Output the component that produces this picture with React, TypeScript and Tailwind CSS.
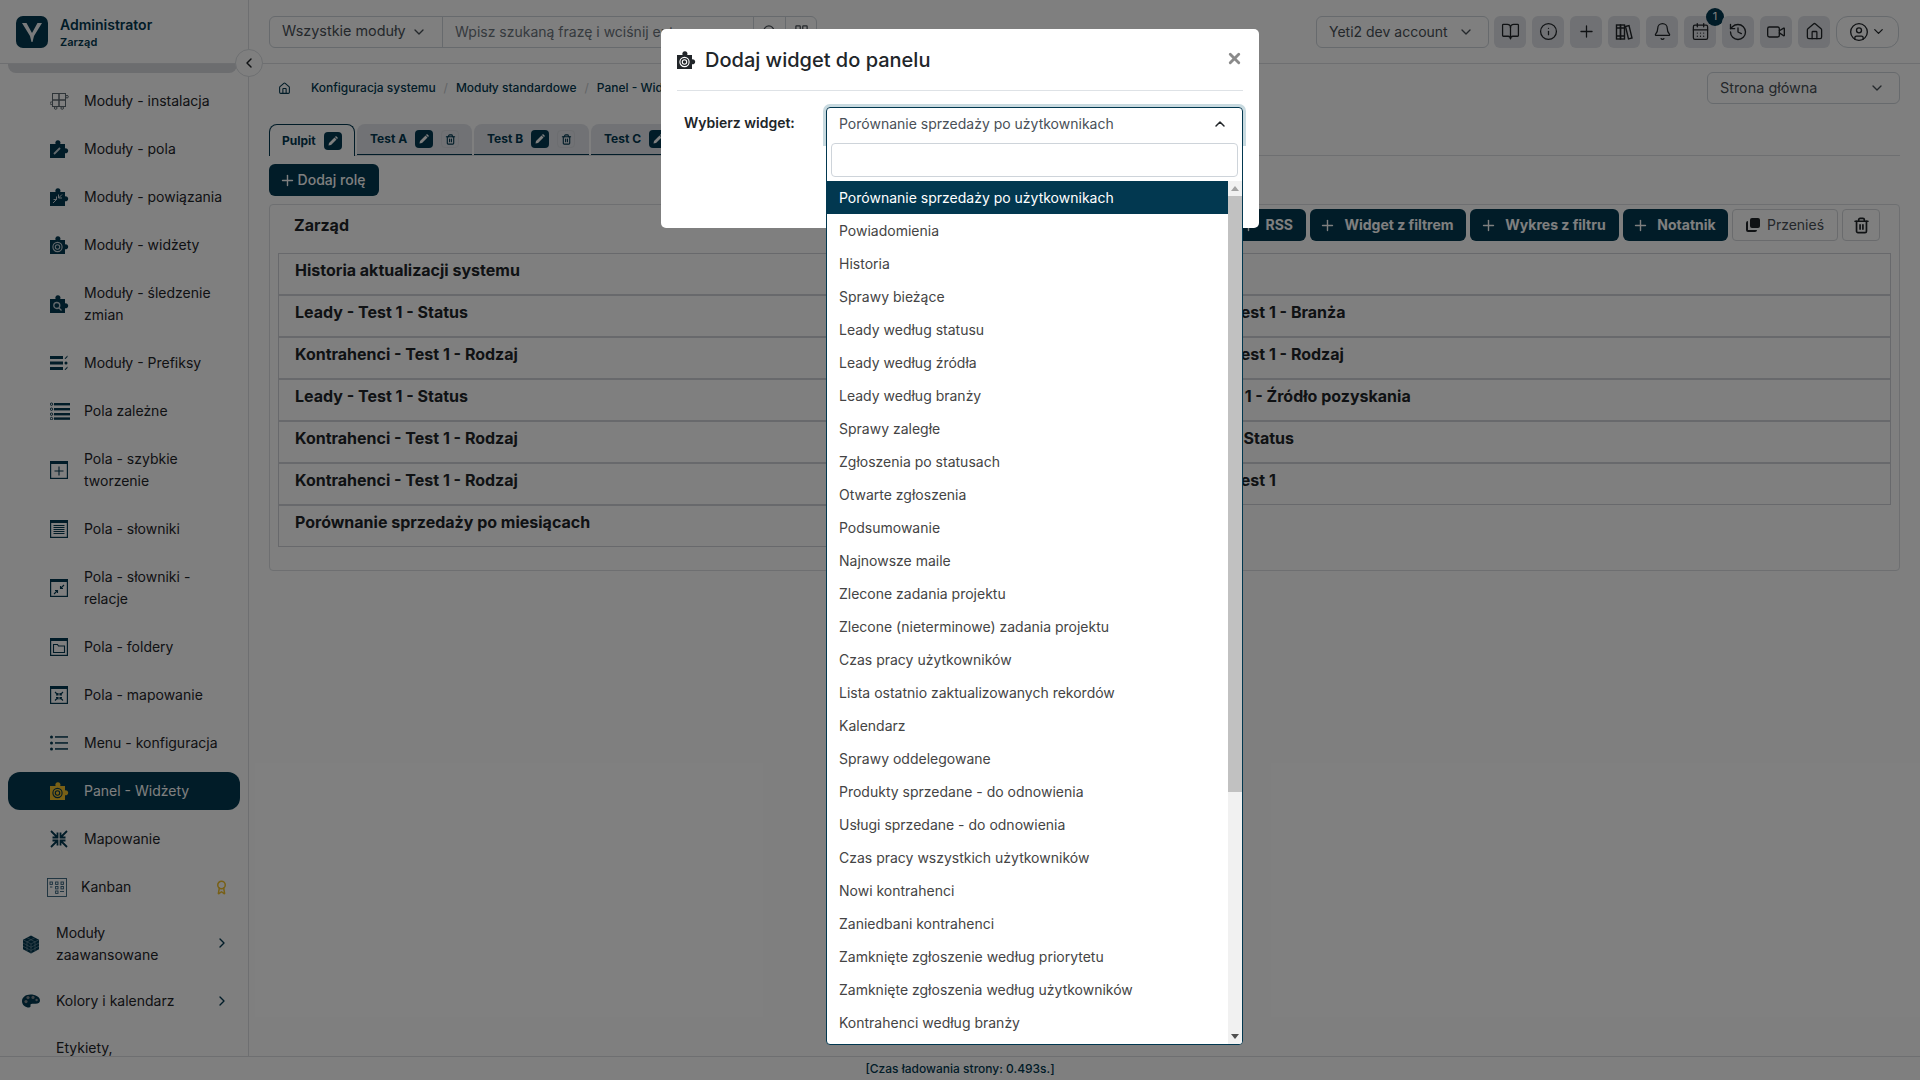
import { ReactNode } from "react";
import {
  Award,
  Bell,
  BookOpen,
  CalendarDays,
  ChevronDown,
  ChevronLeft,
  ChevronRight,
  ChevronUp,
  CircleUser,
  History,
  House,
  Info,
  LayoutGrid,
  Plus,
  Search,
  Trash2,
  Video,
  X,
} from "lucide-react";

const PUZZLE = "M0 4h5.6a2.6 2.6 0 1 1 4.6 0H15v4.4a2.5 2.5 0 1 1 0 4.8V18H0z";

const Puzzle = ({ color = "#023850", children }: { color?: string; children?: ReactNode }) => (
  <svg width="20" height="18" viewBox="0 0 20 18">
    <path d={PUZZLE} fill={color} />
    {children}
  </svg>
);

const Gauge = ({ stroke = "#c8d4da" }: { stroke?: string }) => (
  <g fill="none" stroke={stroke} strokeWidth="1.1">
    <circle cx="7.5" cy="11" r="4.6" />
    <circle cx="7.5" cy="11" r="2.2" />
  </g>
);

const PuzzleGrid = () => (
  <svg width="20" height="18" viewBox="0 0 20 18" fill="none" stroke="#5f6b73" strokeWidth="1">
    <rect x="2.5" y="1.5" width="6.5" height="6.5" />
    <rect x="9" y="1.5" width="6.5" height="6.5" />
    <rect x="2.5" y="8" width="6.5" height="6.5" />
    <rect x="9" y="8" width="6.5" height="6.5" />
    <circle cx="5.7" cy="16" r="1.3" />
    <circle cx="12.2" cy="16" r="1.3" />
    <circle cx="17" cy="4.7" r="1.3" />
    <circle cx="1.3" cy="11.2" r="1.3" />
  </svg>
);

const Window = ({ children }: { children?: ReactNode }) => (
  <svg width="18" height="18" viewBox="0 0 18 18">
    <rect x="0.6" y="0.6" width="16.8" height="16.8" fill="none" stroke="#023850" strokeWidth="1.2" />
    <rect x="0.6" y="0.6" width="16.8" height="2.4" fill="#023850" />
    <g fill="none" stroke="#023850" strokeWidth="1.1">{children}</g>
  </svg>
);

const Prefix = () => (
  <svg width="18" height="18" viewBox="0 0 18 18" fill="#023850">
    <rect x="0" y="2" width="13" height="3" />
    <rect x="0" y="7.5" width="13" height="3" />
    <rect x="0" y="13" width="13" height="3" />
    <circle cx="16" cy="9" r="1.5" />
    <path d="M14.5 4.5l3-3v1.6l-2 2zM14.5 15.5l3-3v1.6l-2 2z" />
  </svg>
);

const Dependent = () => (
  <svg width="20" height="18" viewBox="0 0 20 18">
    <g fill="#023850">
      <rect x="4" y="1" width="16" height="2.4" />
      <rect x="4" y="6" width="16" height="2.4" />
      <rect x="4" y="11" width="16" height="2.4" />
      <rect x="4" y="15.4" width="16" height="2.4" />
    </g>
    <g fill="none" stroke="#023850">
      <circle cx="1.5" cy="2.2" r="1.2" />
      <circle cx="1.5" cy="7.2" r="1.2" />
      <circle cx="1.5" cy="12.2" r="1.2" />
      <circle cx="1.5" cy="16.6" r="1.2" />
    </g>
  </svg>
);

const MenuList = () => (
  <svg width="18" height="16" viewBox="0 0 18 16" fill="#023850">
    <circle cx="1.5" cy="2" r="1.5" />
    <circle cx="1.5" cy="8" r="1.5" />
    <circle cx="1.5" cy="14" r="1.5" />
    <rect x="5" y="1.2" width="13" height="1.5" />
    <rect x="5" y="7.2" width="13" height="1.5" />
    <rect x="5" y="13.2" width="13" height="1.5" />
  </svg>
);

const Compress = () => (
  <svg width="18" height="18" viewBox="0 0 18 18" fill="none" stroke="#023850" strokeWidth="1.8">
    <path d="M1 1l5.5 5.500M7.500 2.500v5H2.500M17 1l-5.500 5.500M10.500 2.500v5h5M1 17l5.500-5.500M7.500 15.500v-5h-5M17 17l-5.500-5.500M10.500 15.500v-5h5" />
  </svg>
);

const KanbanIcon = () => (
  <svg width="20" height="19" viewBox="0 0 20 19" fill="none" stroke="#2f5d78" strokeWidth="0.9">
    <rect x="0.5" y="0.5" width="19" height="18" />
    <rect x="3" y="4" width="2.4" height="2.4" />
    <rect x="8.6" y="4" width="2.4" height="2.4" />
    <rect x="14" y="4" width="2.4" height="2.4" />
    <rect x="8.6" y="8.5" width="2.4" height="2.4" />
    <rect x="14" y="8.5" width="2.4" height="2.4" />
    <rect x="8.6" y="13" width="2.4" height="2.4" />
    <path d="M3 9h2.4M13 13.5h4" />
  </svg>
);

const Cube = () => (
  <svg width="18" height="19" viewBox="0 0 18 19">
    <path d="M9 0.5l8 4.2v9.6l-8 4.2-8-4.2V4.7z" fill="#023850" />
    <g stroke="#7f9aa8" strokeWidth="0.6" fill="none">
      <path d="M9 9v9.5M1 4.7L9 9l8-4.3M1 8l8 4.3L17 8M1 11.2l8 4.3 8-4.3M5 2.6l8 4.3v9.4M13 2.6L5 6.9v9.4" />
    </g>
  </svg>
);

const Palette = () => (
  <svg width="18" height="14" viewBox="0 0 18 14">
    <path d="M8.5 0.5C3.5 0.5 0 3.4 0 7.2s3.4 6.3 7 6.3c1.6 0 1.7-1.1 1.5-2-.2-1 .3-1.8 1.6-1.8h3.6c2.4 0 4.3-1 4.3-3C18 2.8 13.5 0.5 8.5 0.5z" fill="#023850" />
    <g fill="#808a90">
      <circle cx="4" cy="7.6" r="1.6" />
      <circle cx="6" cy="3.6" r="1.6" />
      <circle cx="11" cy="3.4" r="1.6" />
      <circle cx="14.6" cy="6" r="1.2" />
    </g>
  </svg>
);

const Books = () => (
  <svg width="18" height="18" viewBox="0 0 18 18" fill="none" stroke="#212529" strokeWidth="1.4">
    <rect x="1.5" y="2" width="4" height="14" />
    <rect x="5.500" y="2" width="4" height="14" />
    <path d="M10.500 3.500l3.500-1 3 12.500-3.500 1z" />
    <path d="M1.500 5h8M1.500 13h8" />
  </svg>
);

type MenuItem = { label: ReactNode; icon: ReactNode; lines?: number };

const items: MenuItem[] = [
  { label: "Moduły - instalacja", icon: <PuzzleGrid /> },
  {
    label: "Moduły - pola",
    icon: (
      <Puzzle>
        <path d="M4 14l6-6" stroke="#c8d4da" strokeWidth="1.8" />
      </Puzzle>
    ),
  },
  {
    label: "Moduły - powiązania",
    icon: (
      <Puzzle>
        <path d="M3 15l4-4M6.500 8.500v3h-3M12 6.500l-3.500 3.500M8.500 6.500v3.500h3.500" stroke="#c8d4da" fill="none" />
      </Puzzle>
    ),
  },
  {
    label: "Moduły - widżety",
    icon: (
      <Puzzle>
        <Gauge />
      </Puzzle>
    ),
  },
  {
    label: "Moduły - śledzenie zmian",
    lines: 2,
    icon: (
      <Puzzle>
        <circle cx="6.800" cy="10.500" r="3" fill="none" stroke="#c8d4da" strokeWidth="1.300" />
        <path d="M9 13l2.500 2.500" stroke="#c8d4da" strokeWidth="1.300" />
      </Puzzle>
    ),
  },
  { label: "Moduły - Prefiksy", icon: <Prefix /> },
  { label: "Pola zależne", icon: <Dependent /> },
  {
    label: "Pola - szybkie tworzenie",
    lines: 2,
    icon: (
      <Window>
        <path d="M9 5.500v9M4.500 10h9" />
      </Window>
    ),
  },
  {
    label: "Pola - słowniki",
    icon: (
      <Window>
        <path d="M3.500 5.500h11M3.500 7.500h11M3.500 9.500h11M3.500 11.500h11M3.500 13.500h11" />
      </Window>
    ),
  },
  {
    label: "Pola - słowniki - relacje",
    lines: 2,
    icon: (
      <Window>
        <path d="M4 15l3.500-3.500M7.500 14v-2.500H5M14 6l-3.500 3.500M10.500 7v2.500H13" />
      </Window>
    ),
  },
  {
    label: "Pola - foldery",
    icon: (
      <Window>
        <path d="M3.500 14.500v-8h4l1 1.500h6v6.500z" />
      </Window>
    ),
  },
  {
    label: "Pola - mapowanie",
    icon: (
      <Window>
        <path d="M5 6l3 3M8 7v2H6M13 6l-3 3M10 7v2h2M5 14.500l3-3M8 13.500v-2H6M13 14.500l-3-3M10 13.500v-2h2" />
      </Window>
    ),
  },
  { label: "Menu - konfiguracja", icon: <MenuList /> },
];

const options = [
  "Porównanie sprzedaży po użytkownikach",
  "Powiadomienia",
  "Historia",
  "Sprawy bieżące",
  "Leady według statusu",
  "Leady według źródła",
  "Leady według branży",
  "Sprawy zaległe",
  "Zgłoszenia po statusach",
  "Otwarte zgłoszenia",
  "Podsumowanie",
  "Najnowsze maile",
  "Zlecone zadania projektu",
  "Zlecone (nieterminowe) zadania projektu",
  "Czas pracy użytkowników",
  "Lista ostatnio zaktualizowanych rekordów",
  "Kalendarz",
  "Sprawy oddelegowane",
  "Produkty sprzedane - do odnowienia",
  "Usługi sprzedane - do odnowienia",
  "Czas pracy wszystkich użytkowników",
  "Nowi kontrahenci",
  "Zaniedbani kontrahenci",
  "Zamknięte zgłoszenie według priorytetu",
  "Zamknięte zgłoszenia według użytkowników",
  "Kontrahenci według branży",
];

const widgetsLeft = [
  "Historia aktualizacji systemu",
  "Leady - Test 1 - Status",
  "Kontrahenci - Test 1 - Rodzaj",
  "Leady - Test 1 - Status",
  "Kontrahenci - Test 1 - Rodzaj",
  "Kontrahenci - Test 1 - Rodzaj",
  "Porównanie sprzedaży po miesiącach",
];

const widgetsRight = [
  "",
  "Kontrahenci - Test 1 - Branża",
  "Kontrahenci - Test 1 - Rodzaj",
  "Kontakty - Test 1 - Źródło pozyskania",
  "Leady - Test 1 - Status",
  "Kontrahenci - Test 1",
];

const SideItem = ({ item }: { item: MenuItem }) => (
  <div className="flex items-center pl-[50px] pr-4 py-[13px] text-sm leading-[22px] text-[#1e2429]">
    <span className="w-[34px] shrink-0 flex items-center">{item.icon}</span>
    <span className="w-[142px]">{item.label}</span>
  </div>
);

const TopIcon = ({ children, badge }: { children: ReactNode; badge?: string }) => (
  <div className="relative w-8 h-8 rounded-md bg-[#e0e3e8] flex items-center justify-center text-[#212529]">
    {children}
    {badge && (
      <span className="absolute -top-[8px] right-[-8px] w-[18px] h-[18px] rounded-full bg-[#023850] text-white text-[11px] flex items-center justify-center">
        {badge}
      </span>
    )}
  </div>
);

const PencilBox = () => (
  <span className="w-[18px] h-[18px] rounded bg-[#023850] flex items-center justify-center">
    <svg width="10" height="10" viewBox="0 0 10 10">
      <path d="M0.500 9.500l0.500-2.500 5.500-5.500 2 2-5.500 5.500zM7 1l1-1 2 2-1 1z" fill="#fff" />
    </svg>
  </span>
);

const Tab = ({ label, trash }: { label: string; trash?: boolean }) => (
  <div className="flex items-center gap-2 h-full w-[115px] pl-[13px] rounded-t-lg bg-[#e2e5ea] border-b border-[#023850]">
    <span className="text-xs font-bold text-[#023850]">{label}</span>
    <PencilBox />
    {trash && (
      <span className="w-[18px] h-[18px] rounded border border-[#d8dbe0] flex items-center justify-center text-[#023850]">
        <Trash2 size={11} strokeWidth={2.4} />
      </span>
    )}
  </div>
);

const ToolButton = ({ label, width }: { label: string; width: string }) => (
  <div className={`${width} h-8 rounded-md bg-[#023850] text-white text-sm font-bold flex items-center justify-center gap-2 pr-[3px]`}>
    <Plus size={17} />
    {label}
  </div>
);

const WidgetRow = ({ label }: { label: string }) => (
  <div className="h-[42px] border border-[#d0d3d8] pl-4 pt-1 text-base font-bold text-[#212529]">
    {label}
  </div>
);

export default function App() {
  return (
    <div className="relative w-screen h-screen overflow-hidden bg-white flex flex-col font-['Inter',sans-serif]">
      <div className="flex flex-1 min-h-0">
        <aside className="relative w-[249px] shrink-0 border-r border-[#dcdfe3] flex flex-col overflow-hidden">
          <div className="h-16 shrink-0 border-b border-[#dcdfe3] flex items-center pl-4 gap-3">
            <svg width="32" height="32" viewBox="0 0 32 32">
              <rect width="32" height="32" rx="7" fill="#023850" />
              <path d="M6 7h4.500l5.500 10 5.500-10H26l-8 13-1.500 6h-1L14 20z" fill="#f4f7f8" />
            </svg>
            <div className="flex flex-col pt-0.5">
              <span className="text-sm font-semibold leading-[18px] text-[#023850]">Administrator</span>
              <span className="text-[11px] font-semibold leading-[16px] text-[#023850]">Zarząd</span>
            </div>
          </div>
          <div className="h-[9px] shrink-0 ml-2 w-[229px] rounded-b-lg bg-[#d8dade]" />
          <div className="mt-1 flex flex-col">
            {items.map((item, i) => (
              <SideItem key={i} item={item} />
            ))}
            <div className="mx-2 my-[5px] h-[38px] rounded-xl bg-[#023850] flex items-center pl-[42px] text-sm text-white">
              <span className="w-[34px] shrink-0 flex items-center">
                <Puzzle color="#f0c02c">
                  <Gauge stroke="#023850" />
                </Puzzle>
              </span>
              Panel - Widżety
            </div>
            <SideItem item={{ label: "Mapowanie", icon: <Compress /> }} />
            <div className="flex items-center pl-[47px] pr-[19px] py-[13px] text-sm leading-[22px] text-[#1e2429]">
              <span className="w-[34px] shrink-0 flex items-center">
                <KanbanIcon />
              </span>
              Kanban
              <Award size={15} strokeWidth={2.4} className="ml-auto text-[#f0c02c]" />
            </div>
            <div className="-mt-0.5 flex items-center pl-[22px] pr-[18px] py-[13px] text-sm leading-[22px] text-[#1e2429]">
              <span className="w-[34px] shrink-0 flex items-center">
                <Cube />
              </span>
              <span className="w-[110px]">Moduły zaawansowane</span>
              <ChevronRight size={16} className="ml-auto -mt-0.5 text-[#023850]" />
            </div>
            <div className="-mt-0.5 flex items-center pl-[22px] pr-[18px] py-[13px] text-sm leading-[22px] text-[#1e2429]">
              <span className="w-[34px] shrink-0 flex items-center">
                <Palette />
              </span>
              Kolory i kalendarz
              <ChevronRight size={16} className="ml-auto text-[#023850]" />
            </div>
            <div className="pl-14 pt-3 text-sm leading-[22px] text-[#1e2429]">Etykiety,</div>
          </div>
        </aside>

        <main className="flex-1 min-w-0 flex flex-col">
          <div className="h-16 shrink-0 border-b border-[#dcdfe3] flex items-center pl-5 pr-[21px]">
            <div className="flex h-8 w-[548px] border border-[#ced4da] rounded-md text-sm text-[#495057]">
              <div className="w-[173px] border-r border-[#ced4da] flex items-center justify-between pl-3 pr-[15px] text-[14.4px]">
                Wszystkie moduły
                <ChevronDown size={16} />
              </div>
              <div className="w-[311px] border-r border-[#ced4da] flex items-center pl-3 text-[#6c757d]">
                Wpisz szukaną frazę i wciśnij enter
              </div>
              <div className="w-8 border-r border-[#ced4da] flex items-center justify-center">
                <Search size={15} />
              </div>
              <div className="flex-1 flex items-center justify-center">
                <LayoutGrid size={15} />
              </div>
            </div>
            <div className="ml-auto w-[173px] h-8 border border-[#ced4da] rounded-md flex items-center justify-between pl-3 pr-[14px] text-sm text-[#495057]">
              Yeti2 dev account
              <ChevronDown size={16} />
            </div>
            <div className="ml-[5px] flex gap-1.5">
              <TopIcon><BookOpen size={19} strokeWidth={1.6} /></TopIcon>
              <TopIcon><Info size={19} strokeWidth={1.6} /></TopIcon>
              <TopIcon><Plus size={19} strokeWidth={1.6} /></TopIcon>
              <TopIcon><Books /></TopIcon>
              <TopIcon><Bell size={19} strokeWidth={1.6} /></TopIcon>
              <TopIcon badge="1"><CalendarDays size={19} strokeWidth={1.6} /></TopIcon>
              <TopIcon><History size={20} strokeWidth={1.6} /></TopIcon>
              <TopIcon><Video size={20} strokeWidth={1.6} /></TopIcon>
              <TopIcon><House size={19} strokeWidth={1.6} /></TopIcon>
            </div>
            <div className="ml-1.5 w-[63px] h-8 border border-[#ced4da] rounded-xl flex items-center justify-center gap-0.5 text-[#212529]">
              <CircleUser size={20} strokeWidth={1.6} />
              <ChevronDown size={15} />
            </div>
          </div>

          <div className="flex-1 min-h-0 px-5 pt-2">
            <div className="h-8 flex items-center text-xs text-[#023850]">
              <House size={13} className="ml-[9px] mr-5" />
              <span className="font-medium">Konfiguracja systemu</span>
              <span className="mx-[8px] text-[#c4c8cc]">/</span>
              <span className="font-medium">Moduły standardowe</span>
              <span className="mx-[8px] text-[#c4c8cc]">/</span>
              <span className="font-medium">Panel - Widżety</span>
              <div className="ml-auto w-[193px] h-8 border border-[#ced4da] rounded-md flex items-center justify-between pl-3 pr-[14px] text-[14.4px] text-[#495057]">
                Strona główna
                <ChevronDown size={16} />
              </div>
            </div>

            <div className="mt-5 h-8 flex border-b border-[#dcdfe3] gap-[2px]">
              <div className="flex items-center gap-2 h-8 w-[86px] pl-3 rounded-t-lg border border-b-0 border-[#023850] bg-white">
                <span className="text-xs font-bold text-[#023850]">Pulpit</span>
                <PencilBox />
              </div>
              <Tab label="Test A" trash />
              <Tab label="Test B" trash />
              <Tab label="Test C" trash />
            </div>

            <div className="mt-2 w-[110px] h-8 rounded-md bg-[#023850] text-white text-sm font-medium flex items-center justify-center gap-0.5 pr-1">
              <Plus size={17} />
              Dodaj rolę
            </div>

            <div className="mt-2 h-[367px] border border-[#dcdfe3] rounded pt-1">
              <div className="flex items-center h-8 pl-6 pr-[19px]">
                <span className="text-base font-bold text-[#212529]">Zarząd</span>
                <div className="ml-auto flex gap-1">
                  <div className="w-[90px] h-8 rounded-md bg-[#023850] text-white text-sm font-bold flex items-center justify-end gap-2 pr-[13px]">
                    <Plus size={17} />
                    RSS
                  </div>
                  <ToolButton label="Widget z filtrem" width="w-[156px]" />
                  <ToolButton label="Wykres z filtru" width="w-[149px]" />
                  <ToolButton label="Notatnik" width="w-[105px]" />
                  <div className="w-[106px] h-8 rounded border border-[#d4d7db] text-sm text-[#495057] flex items-center justify-center gap-[7px]">
                    <svg width="14" height="14" viewBox="0 0 14 14" fill="#212529">
                      <rect x="4" y="0" width="10" height="10" rx="2" />
                      <path d="M0 5a2 2 0 0 1 2-2v9h9a2 2 0 0 1-2 2H2a2 2 0 0 1-2-2z" />
                    </svg>
                    Przenieś
                  </div>
                  <div className="w-[38px] h-8 rounded border border-[#d4d7db] flex items-center justify-center text-[#212529]">
                    <Trash2 size={17} strokeWidth={2.4} />
                  </div>
                </div>
              </div>
              <div className="mt-3 mx-2 grid grid-cols-[826px_1fr] items-start">
                <div className="flex flex-col">
                  {widgetsLeft.map((w, i) => (
                    <WidgetRow key={i} label={w} />
                  ))}
                </div>
                <div className="flex flex-col">
                  {widgetsRight.map((w, i) => (
                    <WidgetRow key={i} label={w} />
                  ))}
                </div>
              </div>
            </div>
          </div>
        </main>
      </div>

      <footer className="h-6 shrink-0 border-t border-[#dcdfe3] flex items-center justify-center text-xs font-medium text-[#023850]">
        [Czas ładowania strony: 0.493s.]
      </footer>

      <div className="absolute left-[235px] top-[49px] w-7 h-7 rounded-full bg-white border border-[#dcdfe3] flex items-center justify-center text-[#212529]">
        <ChevronLeft size={16} strokeWidth={2.2} />
      </div>

      <div className="absolute inset-0 bg-black/50 flex justify-center">
        <div className="mt-[29px] w-[598px] h-[199px] bg-white rounded-[5px] px-4 self-start">
          <div className="h-[62px] border-b border-[#dee2e6] flex items-center">
            <Puzzle color="#212529">
              <Gauge stroke="#ffffff" />
            </Puzzle>
            <span className="ml-2 text-xl font-medium text-[#212529]">Dodaj widget do panelu</span>
            <X size={17} strokeWidth={4} className="ml-auto mb-[3px] text-[#8a8a8a]" />
          </div>
          <div className="mt-4 flex">
            <div className="w-[149px] pl-[7px] pt-1.5 text-sm font-semibold text-[#212529]">Wybierz widget:</div>
            <div className="relative flex-1 h-9 rounded-t shadow-[0_0_0_3px_#c8dae0]">
              <div className="absolute left-0 right-0 top-0 h-[938px] bg-white border border-[#023850] rounded flex flex-col overflow-hidden">
                <div className="h-[35px] shrink-0 flex items-center justify-between pl-3 pr-[14px] pb-[3px] text-sm text-[#495057]">
                  Porównanie sprzedaży po użytkownikach
                  <ChevronUp size={16} className="text-[#212529]" strokeWidth={2.2} />
                </div>
                <div className="shrink-0 mx-1 h-[34px] border border-[#ced4da] rounded" />
                <div className="relative flex-1 min-h-0 mt-1 overflow-hidden">
                  <div className="mr-[14px] flex flex-col">
                    {options.map((o, i) => (
                      <div
                        key={o}
                        className={
                          i === 0
                            ? "h-[33px] shrink-0 pl-3 flex items-center text-sm bg-[#023850] text-white"
                            : "h-[33px] shrink-0 pl-3 flex items-center text-sm text-[#444]"
                        }
                      >
                        {o}
                      </div>
                    ))}
                  </div>
                  <div className="absolute right-0 top-0 bottom-0 w-[14px] bg-[#f1f1f1] flex flex-col items-center">
                    <svg width="8" height="5" viewBox="0 0 8 5" className="mt-[5px]">
                      <path d="M4 0l4 5H0z" fill="#a3a3a3" />
                    </svg>
                    <div className="mt-[5px] w-full h-[596px] bg-[#c1c1c1]" />
                    <svg width="8" height="5" viewBox="0 0 8 5" className="mt-auto mb-[5px]">
                      <path d="M4 5l4-5H0z" fill="#505050" />
                    </svg>
                  </div>
                </div>
              </div>
            </div>
          </div>
        </div>
      </div>
    </div>
  );
}
